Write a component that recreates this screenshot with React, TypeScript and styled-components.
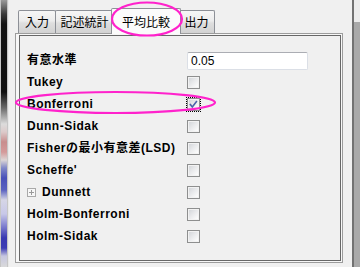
import React from "react";
import styled, { createGlobalStyle } from "styled-components";

const Global = createGlobalStyle`
  html, body { margin: 0; padding: 0; background: #f0f0f0; }
  body { width: 360px; height: 267px; overflow: hidden; }
`;

const Page = styled.div`
  position: relative;
  width: 360px;
  height: 267px;
  display: flex;
  flex-direction: row;
  background: #f0f0f0;
`;

const LeftStrip = styled.div`
  margin-left: 1px;
  width: 6px;
  height: 267px;
  background: linear-gradient(
    to bottom,
    #9a9a9a 0px,
    #3a3a3a 14px,
    #141414 24px,
    #101010 92px,
    #6a6a6a 108px,
    #dcdcdc 124px,
    #dccaca 132px,
    #c88e8e 142px,
    #d49a9a 152px,
    #dcd6d6 160px,
    #8088c8 168px,
    #4850b8 178px,
    #5a62c0 190px,
    #d6d6e6 200px,
    #c8c8e8 214px,
    #8c8cd4 224px,
    #3838b0 238px,
    #3c3cb4 248px,
    #c6c6e0 256px,
    #dadada 267px
  );
  box-shadow: -1px 0 1px rgba(120, 120, 120, 0.35), 1px 0 1px rgba(120, 120, 120, 0.35);
`;

const Main = styled.div`
  margin-left: 8px;
  width: 328px;
  display: flex;
  flex-direction: column;
`;

const TabBar = styled.div`
  height: 33px;
  display: flex;
  align-items: flex-end;
  padding-left: 3px;
  box-sizing: border-box;
`;

const Tab = styled.div<{ $w: number; $active?: boolean; $ml?: number }>`
  position: relative;
  box-sizing: border-box;
  width: ${(p) => p.$w}px;
  height: ${(p) => (p.$active ? 26 : 23)}px;
  margin-left: ${(p) => p.$ml ?? 0}px;
  margin-bottom: ${(p) => (p.$active ? -1 : 0)}px;
  z-index: ${(p) => (p.$active ? 2 : 1)};
  border: 1px solid #8d9097;
  border-bottom: 0;
  border-radius: 2px 2px 0 0;
  background: ${(p) =>
    p.$active
      ? "#fbfbfb"
      : "linear-gradient(to bottom, #f6f6f6 0%, #ececec 45%, #dedede 55%, #d2d2d2 100%)"};
  font-family: "Noto Sans CJK JP", "Liberation Sans", sans-serif;
  font-size: 12px;
  color: #000;
  text-align: center;
  line-height: 21px;
  padding-top: ${(p) => (p.$active ? 2 : 0)}px;
  white-space: nowrap;
`;

const Pane = styled.div`
  box-sizing: border-box;
  height: 230px;
  border: 1px solid #9c9c9c;
  background: #f7f7f7;
  padding: 1px 1px 1px 3px;
  display: flex;
`;

const GroupBox = styled.div`
  box-sizing: border-box;
  flex: 1;
  border: 1px solid #676767;
  background: #f0f0f0;
  padding: 13px 0 0 7px;
  display: grid;
  grid-template-columns: 160px 1fr;
  grid-auto-rows: 22px;
  align-items: center;
`;

const Label = styled.div`
  display: flex;
  align-items: center;
  gap: 6px;
  font-family: "Liberation Sans", "Noto Sans CJK JP", sans-serif;
  font-weight: 700;
  font-size: 12px;
  letter-spacing: 0.5px;
  color: #000;
  white-space: nowrap;
  line-height: 14px;
`;

const Cell = styled.div`
  display: flex;
  align-items: center;
`;

const TextInput = styled.div`
  box-sizing: border-box;
  width: 121px;
  height: 18px;
  margin-top: 1px;
  background: #fff;
  border: 1px solid #dbdfe6;
  border-top-color: #abadb3;
  border-radius: 2px;
  padding-left: 3px;
  font-family: "Liberation Sans", sans-serif;
  font-size: 12px;
  line-height: 16px;
  color: #000;
`;

const Box = styled.span<{ $focus?: boolean }>`
  box-sizing: border-box;
  width: 13px;
  height: 13px;
  border: 1px solid #8e8f8f;
  background: linear-gradient(135deg, #cfd2d6 0%, #e8e9eb 45%, #fbfbfb 85%, #ffffff 100%);
  box-shadow: inset 0 0 0 1px #f2f2f2;
  display: flex;
  align-items: center;
  justify-content: center;
  outline: ${(p) => (p.$focus ? "1px dotted #000" : "none")};
  outline-offset: 0px;
`;

const PlusBox = styled.span`
  box-sizing: border-box;
  width: 9px;
  height: 9px;
  border: 1px solid #a9a9a9;
  background: #f7f7f7;
  display: inline-flex;
  align-items: center;
  justify-content: center;
`;

const Gap = styled.div`
  width: 9px;
`;

const DarkLine = styled.div`
  width: 2px;
  height: 267px;
  background: #727272;
`;

const ScrollStrip = styled.div`
  width: 6px;
  height: 267px;
  background: linear-gradient(to bottom, #ececec 0px, #ececec 22px, #a9a9a9 22px, #a9a9a9 100%);
`;

const Overlay = styled.svg`
  position: absolute;
  left: 0;
  top: 0;
  pointer-events: none;
  z-index: 10;
`;

function CheckBox({ checked, focus }: { checked?: boolean; focus?: boolean }) {
  return (
    <Box $focus={focus}>
      {checked && (
        <svg width="11" height="11" viewBox="0 0 11 11">
          <path d="M2.4 5.6 L4.3 7.9 L8.4 2.6" fill="none" stroke="#4b62a8" strokeWidth="1.6" strokeLinecap="square" />
        </svg>
      )}
    </Box>
  );
}

const rows: { label: React.ReactNode; checked?: boolean; focus?: boolean }[] = [
  { label: "Tukey" },
  { label: "Bonferroni", checked: true, focus: true },
  { label: "Dunn-Sidak" },
  { label: "Fisherの最小有意差(LSD)" },
  { label: "Scheffe'" },
  {
    label: (
      <>
        <PlusBox>
          <svg width="7" height="7" viewBox="0 0 7 7">
            <path d="M1 3.5 H6 M3.5 1 V6" stroke="#9a9a9a" strokeWidth="1" />
          </svg>
        </PlusBox>
        Dunnett
      </>
    ),
  },
  { label: "Holm-Bonferroni" },
  { label: "Holm-Sidak" },
];

export default function App() {
  return (
    <Page>
      <Global />
      <LeftStrip />
      <Main>
        <TabBar>
          <Tab $w={38}>入力</Tab>
          <Tab $w={59} $ml={-1}>記述統計</Tab>
          <Tab $w={70} $ml={-3} $active>平均比較</Tab>
          <Tab $w={37} $ml={-3}>出力</Tab>
        </TabBar>
        <Pane>
          <GroupBox>
            <Label>有意水準</Label>
            <Cell>
              <TextInput>0.05</TextInput>
            </Cell>
            {rows.map((r, i) => (
              <React.Fragment key={i}>
                <Label>{r.label}</Label>
                <Cell>
                  <CheckBox checked={r.checked} focus={r.focus} />
                </Cell>
              </React.Fragment>
            ))}
          </GroupBox>
        </Pane>
      </Main>
      <Gap />
      <DarkLine />
      <ScrollStrip />
      <Overlay width="360" height="267" viewBox="0 0 360 267">
        <ellipse cx="147" cy="19" rx="35" ry="16.5" fill="none" stroke="#ff22cc" strokeWidth="2.2" />
        <ellipse cx="115.5" cy="102.5" rx="99.5" ry="10.5" fill="none" stroke="#ff22cc" strokeWidth="2.2" />
      </Overlay>
    </Page>
  );
}
